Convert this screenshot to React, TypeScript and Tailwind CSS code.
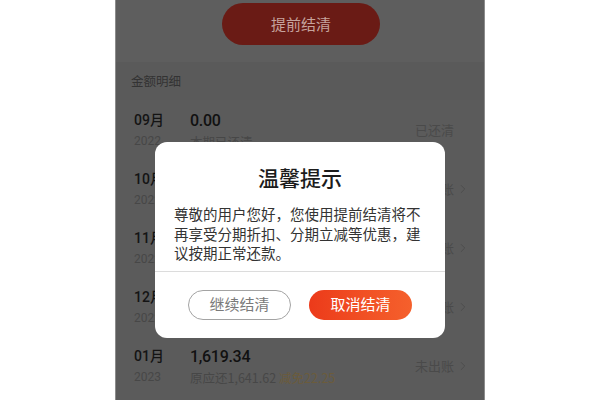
import { ChevronRight } from 'lucide-react';

type Row = {
  month: string;
  year: string;
  amount: string;
  sub: string;
  relief?: string;
  status: string;
  arrow: boolean;
};

const rows: Row[] = [
  { month: '09月', year: '2022', amount: '0.00', sub: '本期已还清', status: '已还清', arrow: false },
  { month: '10月', year: '2022', amount: '1,619.34', sub: '原应还1,641.62', relief: '减免22.25', status: '未出账', arrow: true },
  { month: '11月', year: '2022', amount: '1,619.34', sub: '原应还1,641.62', relief: '减免22.25', status: '未出账', arrow: true },
  { month: '12月', year: '2022', amount: '1,619.34', sub: '原应还1,641.62', relief: '减免22.25', status: '未出账', arrow: true },
  { month: '01月', year: '2023', amount: '1,619.34', sub: '原应还1,641.62', relief: '减免22.25', status: '未出账', arrow: true },
];

const cjk = { fontFamily: '"Noto Sans CJK SC", "Noto Sans", sans-serif' };
const num = { fontFamily: 'Roboto, "Noto Sans CJK SC", sans-serif' };

function BillRow({ row }: { row: Row }) {
  return (
    <div className="h-[59px] flex items-start pl-[18px] pr-[14px]">
      <div className="w-[56px] pt-[11px]">
        <div className="text-[14px] leading-[18px] font-medium text-[#141414]" style={num}>
          {row.month}
        </div>
        <div className="mt-[4px] text-[12px] leading-[16px] text-[#474747]" style={num}>
          {row.year}
        </div>
      </div>
      <div className="flex-1 pt-[11px]">
        <div className="text-[16px] leading-[20px] font-medium tracking-[-0.3px] text-[#111]" style={num}>
          {row.amount}
        </div>
        <div className="mt-[2px] text-[12.5px] leading-[18px] text-[#474747]" style={cjk}>
          {row.sub}
          {row.relief && <span className="ml-[3px] text-[#6b5c3c]">{row.relief}</span>}
        </div>
      </div>
      <div className="pt-[21px] flex items-center text-[13px] leading-[18px] text-[#4a4a4a]" style={cjk}>
        {row.status}
        <ChevronRight size={14} strokeWidth={1.4} className={row.arrow ? 'ml-[2px] text-[#4a4a4a]' : 'ml-[2px] opacity-0'} />
      </div>
    </div>
  );
}

export default function App() {
  return (
    <div className="w-[600px] h-[400px] bg-white flex justify-center overflow-hidden">
      <div className="relative w-[370px] h-[400px] bg-[#5b5b5b] border-x border-[#8c8c8c] overflow-hidden">
        <div className="h-[62px] bg-[#5e5e5e] flex justify-center pt-[3px]">
          <div
            className="w-[158px] h-[42px] ml-[2px] rounded-full bg-[#6a1b15] flex items-center justify-center text-[15px] text-[#c6a39d]"
            style={cjk}
          >
            提前结清
          </div>
        </div>
        <div className="h-[38px] bg-[#5a5a5a] flex items-center pl-[15px] text-[12.5px] text-[#333]" style={cjk}>
          金额明细
        </div>
        {rows.map((r) => (
          <BillRow key={r.month} row={r} />
        ))}

        {/* dialog sits over the list */}
        <div className="absolute left-[39px] top-[142px] w-[290px] h-[196px] bg-white rounded-[12px] flex flex-col" style={cjk}>
          <div className="pt-[21px] text-center text-[21px] leading-[28px] font-medium text-[#1c1c1c]">温馨提示</div>
          <div className="mt-[13px] px-[19px] text-[14.5px] leading-[19.5px] text-[#333]">
            尊敬的用户您好，您使用提前结清将不再享受分期折扣、分期立减等优惠，建议按期正常还款。
          </div>
          <div className="mt-[8px] h-px bg-[#dcdcdc]" />
          <div className="flex justify-center gap-[18px] pt-[18px]">
            <div className="w-[103px] h-[30px] rounded-full border border-[#a3a3a3] flex items-center justify-center text-[15px] text-[#7a7a7a]">
              继续结清
            </div>
            <div className="w-[103px] h-[30px] rounded-full bg-gradient-to-r from-[#ec3a1a] to-[#f5602c] flex items-center justify-center text-[15px] text-white">
              取消结清
            </div>
          </div>
        </div>
      </div>
    </div>
  );
}
